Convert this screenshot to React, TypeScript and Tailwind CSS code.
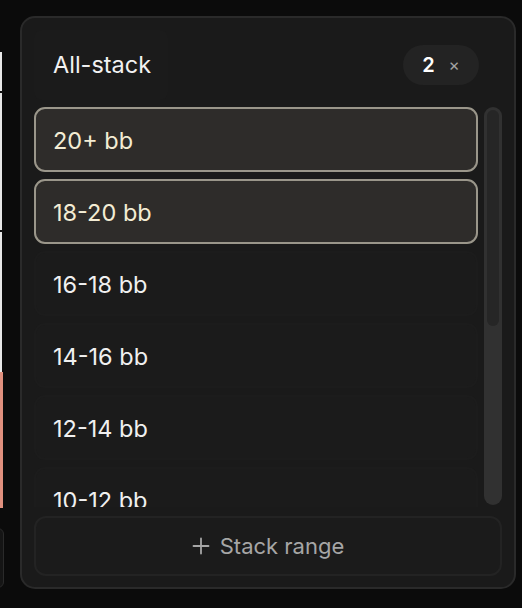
import React from "react";

const items = [
  { label: "20+ bb", selected: true },
  { label: "18-20 bb", selected: true },
  { label: "16-18 bb", selected: false },
  { label: "14-16 bb", selected: false },
  { label: "12-14 bb", selected: false },
  { label: "10-12 bb", selected: false },
  { label: "8-10 bb", selected: false },
];

export default function App() {
  return (
    <div
      className="relative w-[522px] h-[608px] overflow-hidden bg-[#0b0b0b] pt-[16px] pl-[20px]"
      style={{ fontFamily: "Inter, 'Noto Sans', sans-serif" }}
    >
      {/* background page remnants */}
      <div className="absolute left-0 top-[52px] w-[2px] h-[320px] bg-[#e8e8e8]" />
      <div className="absolute left-0 top-[91px] w-[3px] h-[2px] bg-[#111]" />
      <div className="absolute left-0 top-[230px] w-[3px] h-[2px] bg-[#111]" />
      <div className="absolute left-0 top-[372px] w-[3px] h-[136px] bg-[#e0907e]" />
      <div className="absolute left-[-20px] top-[528px] w-[24px] h-[60px] rounded-[6px] border border-[#2a2a2a] bg-[#151515]" />

      <div className="w-[496px] h-[573px] rounded-[15px] border-2 border-[#2a2a2a] bg-[#1a1a1a] flex flex-col px-[12px] pb-[11px]">
        {/* header */}
        <div className="flex items-center justify-between h-[90px] pt-[12px] pb-[7px]">
          <div className="h-[70px] w-[134px] rounded-[8px] bg-[#1b1b1b] flex items-center pl-[19px] text-[23.5px] text-[#f2f2f2]">
            All-stack
          </div>
          <div className="mr-[23px] h-[40px] w-[76px] rounded-full bg-[#232323] flex items-center justify-center gap-[14px]">
            <span className="text-[20px] font-semibold text-white">2</span>
            <span className="text-[17px] text-[#a3a3a3] leading-none">×</span>
          </div>
        </div>

        {/* list + scrollbar */}
        <div className="flex gap-[6px] h-[400px]">
          <div className="flex-1 overflow-hidden flex flex-col gap-[7px]">
            {items.map((it) => (
              <div
                key={it.label}
                className={
                  it.selected
                    ? "shrink-0 h-[65px] rounded-[11px] border-2 border-[#9a968a] bg-[#2e2c2a] flex items-center pl-[17px] pt-[3px] text-[23.5px] text-[#f3ecd4]"
                    : "shrink-0 h-[65px] rounded-[11px] border-2 border-[#1c1c1c] bg-[#1b1b1b] flex items-center pl-[17px] pt-[3px] text-[23.5px] text-[#f0f0f0]"
                }
              >
                {it.label}
              </div>
            ))}
          </div>
          <div className="w-[18px] h-[398px] rounded-full bg-[#313131] p-[3px]">
            <div className="w-full h-[216px] rounded-full bg-[#262626]" />
          </div>
        </div>

        {/* footer */}
        <div className="mt-[9px] h-[61px] rounded-[12px] border-2 border-[#232323] bg-[#1b1b1b] flex items-center justify-center gap-[10px] text-[22px] text-[#a6a6a6]">
          <svg width="18" height="18" viewBox="0 0 18 18" fill="none" stroke="#a6a6a6" strokeWidth="1.8" strokeLinecap="round">
            <path d="M9 1.5v15M1.5 9h15" />
          </svg>
          <span>Stack range</span>
        </div>
      </div>
    </div>
  );
}
